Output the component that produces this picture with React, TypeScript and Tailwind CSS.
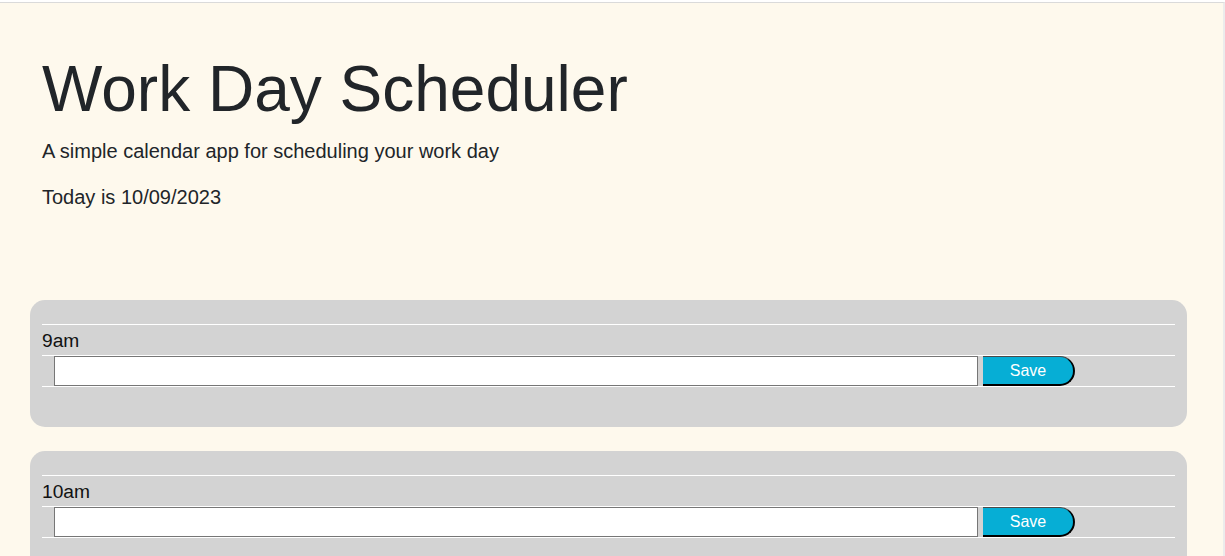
const hours = ["9am", "10am"];

function HourBlock({ hour }: { hour: string }) {
  return (
    <div className="bg-[#d3d3d3] rounded-[15px] px-[12px] pt-[24px] pb-[40px]">
      <div className="border-t border-white h-[31px] pt-[1px] text-[19.2px] leading-[30px] text-[#111]">
        {hour}
      </div>
      <div className="border-t border-b border-white flex gap-[5px] pl-[12px] pr-[100px]">
        <input
          type="text"
          className="flex-1 h-[30px] bg-white border border-[#767676] outline-none px-1 text-[16px]"
        />
        <button className="w-[92px] h-[30px] pt-[2px] bg-[#06aed5] text-white text-[16px] leading-none rounded-r-[15px] border-t border-t-[#4a4a4a] border-r-2 border-b-2 border-black">
          Save
        </button>
      </div>
    </div>
  );
}

export default function App() {
  return (
    <div className="pt-[2px] bg-white font-['Liberation_Sans',Arial,sans-serif]">
      <div className="min-h-[554px] bg-[#fef9ed] border-t border-[#dadada] border-r-2 border-r-[#ececec]">
        <header className="pt-[48px] px-[42px] text-[#212529]">
          <h1 className="text-[64px] leading-[1.2] mb-2 font-normal">
            Work Day Scheduler
          </h1>
          <p className="text-[20px] leading-[30px] mb-[16px]">
            A simple calendar app for scheduling your work day
          </p>
          <p className="text-[20px] leading-[30px]">Today is 10/09/2023</p>
        </header>
        <main className="mt-[88px] pl-[30px] pr-[36px] flex flex-col gap-[24px]">
          {hours.map((h) => (
            <HourBlock key={h} hour={h} />
          ))}
        </main>
      </div>
    </div>
  );
}
